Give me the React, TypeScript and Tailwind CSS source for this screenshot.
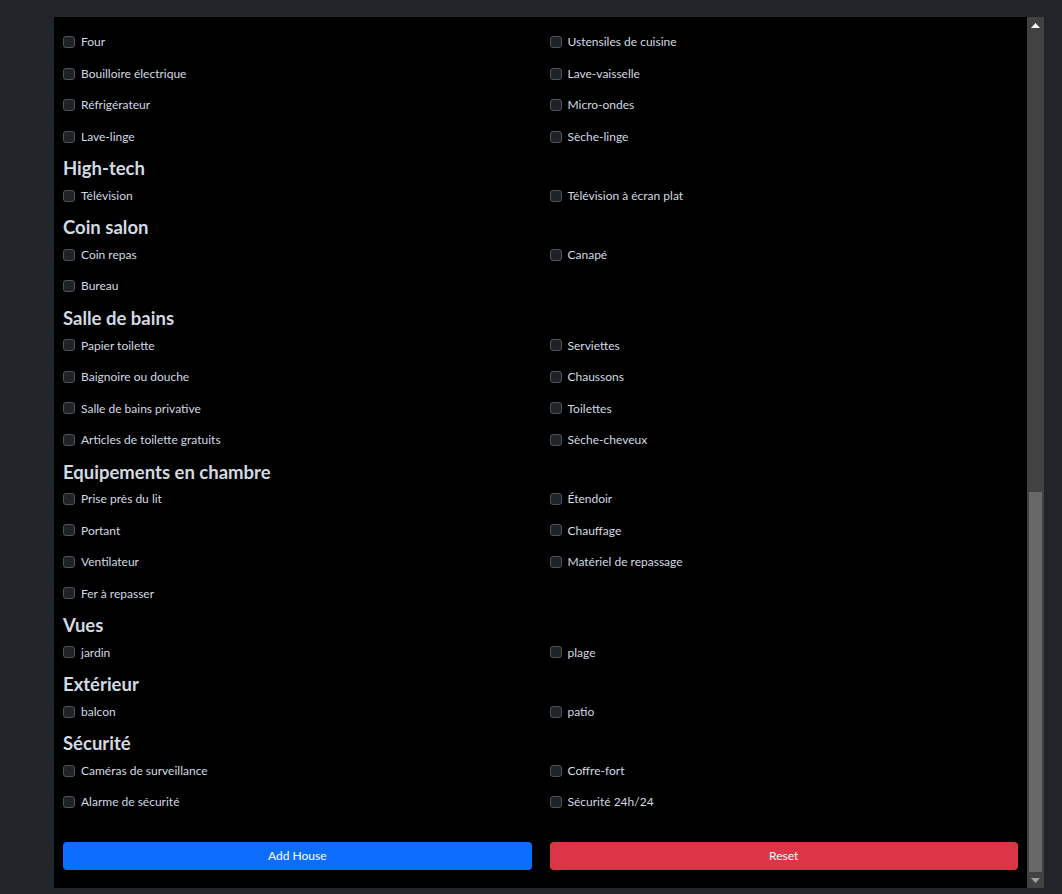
import React from "react";

type Section = { title: string; items: string[] };

const sections: Section[] = [
  {
    title: "",
    items: [
      "Four",
      "Ustensiles de cuisine",
      "Bouilloire électrique",
      "Lave-vaisselle",
      "Réfrigérateur",
      "Micro-ondes",
      "Lave-linge",
      "Sèche-linge",
    ],
  },
  { title: "High-tech", items: ["Télévision", "Télévision à écran plat"] },
  { title: "Coin salon", items: ["Coin repas", "Canapé", "Bureau"] },
  {
    title: "Salle de bains",
    items: [
      "Papier toilette",
      "Serviettes",
      "Baignoire ou douche",
      "Chaussons",
      "Salle de bains privative",
      "Toilettes",
      "Articles de toilette gratuits",
      "Sèche-cheveux",
    ],
  },
  {
    title: "Equipements en chambre",
    items: [
      "Prise près du lit",
      "Étendoir",
      "Portant",
      "Chauffage",
      "Ventilateur",
      "Matériel de repassage",
      "Fer à repasser",
    ],
  },
  { title: "Vues", items: ["jardin", "plage"] },
  { title: "Extérieur", items: ["balcon", "patio"] },
  {
    title: "Sécurité",
    items: [
      "Caméras de surveillance",
      "Coffre-fort",
      "Alarme de sécurité",
      "Sécurité 24h/24",
    ],
  },
];

function Check({ label }: { label: string }) {
  return (
    <label className="flex items-center h-[19.5px] mb-[12px] cursor-pointer">
      <span className="w-[12px] h-[12px] shrink-0 rounded-[3px] border border-[#4d5359] bg-[#1f2326]" />
      <span className="ml-[6px] text-[12px] leading-[19.5px] text-[#d3dae2] whitespace-nowrap">
        {label}
      </span>
    </label>
  );
}

export default function App() {
  return (
    <div
      className="w-[1062px] h-[894px] bg-[#212529] pt-[17px] pl-[54px] pr-[18px] pb-[6px] flex overflow-hidden"
      style={{ fontFamily: 'Lato, "Noto Sans", sans-serif' }}
    >
      <div className="w-[973px] h-[871px] bg-black overflow-hidden px-[9px] pt-[15.25px]">
        {sections.map((s, i) => (
          <div key={i}>
            {s.title && (
              <h5 className="text-[18.5px] leading-[21.6px] font-bold text-[#d3dae2] mb-[6px]">
                {s.title}
              </h5>
            )}
            <div className="grid grid-cols-2 gap-x-[18px]">
              {s.items.map((it) => (
                <Check key={it} label={it} />
              ))}
            </div>
          </div>
        ))}
        <div className="grid grid-cols-2 gap-x-[18px] mt-[18px]">
          <button className="h-[28px] rounded-[4px] bg-[#0d6efd] text-white text-[12px]">
            Add House
          </button>
          <button className="h-[28px] rounded-[4px] bg-[#dc3545] text-white text-[12px]">
            Reset
          </button>
        </div>
      </div>
      <div className="w-[17px] h-[871px] bg-[#424242] flex flex-col items-center">
        <div className="h-[17px] w-full flex items-center justify-center">
          <svg width="9" height="5" viewBox="0 0 9 5">
            <path d="M4.5 0 L9 5 L0 5 Z" fill="#ffffff" />
          </svg>
        </div>
        <div className="flex-1" />
        <div className="w-[13px] h-[380px] bg-[#686868]" />
        <div className="h-[16px] w-full flex items-center justify-center">
          <svg width="9" height="5" viewBox="0 0 9 5">
            <path d="M0 0 L9 0 L4.5 5 Z" fill="#a0a0a0" />
          </svg>
        </div>
      </div>
    </div>
  );
}
